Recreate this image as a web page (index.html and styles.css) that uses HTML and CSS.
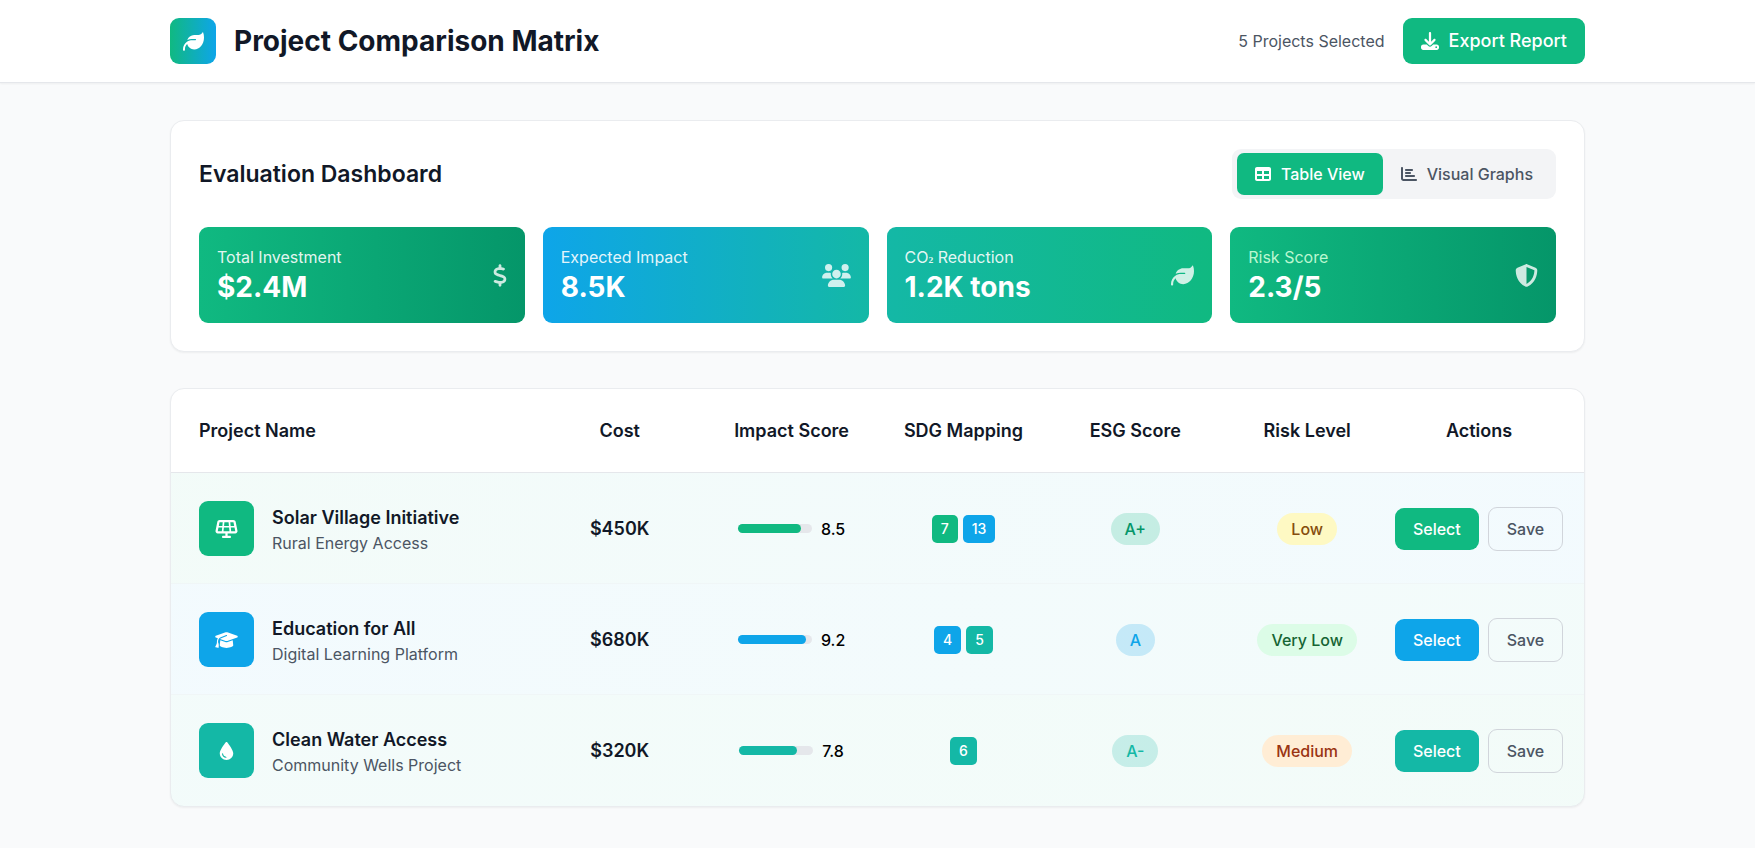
FILE: index.html
```html
<!DOCTYPE html>
<html lang="en">
<head>
<meta charset="utf-8">
<meta name="viewport" content="width=device-width, initial-scale=1">
<title>Project Comparison Matrix</title>
<link rel="stylesheet" href="styles.css">
</head>
<body>
<svg class="sprite" aria-hidden="true">
  <symbol id="leaf" viewBox="0 0 512 512"><path d="M272 96c-78.6 0-145.1 51.5-167.7 122.5c33.6-17 71.5-26.5 111.7-26.5h88c8.8 0 16 7.2 16 16s-7.2 16-16 16H288 216s0 0 0 0c-16.6 0-32.7 1.9-48.3 5.4c-25.9 5.9-49.9 16.4-71.4 30.7c0 0 0 0 0 0C38.3 298.8 0 364.9 0 440v16c0 13.3 10.7 24 24 24s24-10.7 24-24V440c0-48.7 20.7-92.5 53.8-123.2C121.6 392.3 190.3 448 272 448l1 0c132.1-.7 239-130.9 239-291.4c0-42.6-7.5-83.1-21.1-119.6c-2.6-6.9-12.7-6.6-16.2-.1C455.9 72.1 418.7 96 376 96L272 96z"/></symbol>
</svg>

<header class="topbar">
  <div class="container topbar-inner">
    <div class="brand">
      <span class="brand-logo"><svg class="icon icon-logo" aria-hidden="true"><use href="#leaf"/></svg></span>
      <h1 class="brand-title">Project Comparison Matrix</h1>
    </div>
    <div class="topbar-actions">
      <span class="selected-count">5 Projects Selected</span>
      <button type="button" class="btn-export">
        <svg class="icon icon-md" viewBox="0 0 512 512" aria-hidden="true"><path d="M288 32c0-17.7-14.3-32-32-32s-32 14.3-32 32V274.7l-73.4-73.4c-12.5-12.5-32.8-12.5-45.3 0s-12.5 32.8 0 45.3l128 128c12.5 12.5 32.8 12.5 45.3 0l128-128c12.5-12.5 12.5-32.8 0-45.3s-32.8-12.5-45.3 0L288 274.7V32zM64 352c-35.3 0-64 28.7-64 64v32c0 35.3 28.7 64 64 64H448c35.3 0 64-28.7 64-64V416c0-35.3-28.7-64-64-64H346.5l-45.3 45.3c-25 25-65.5 25-90.5 0L165.5 352H64zm368 56a24 24 0 1 1 0 48 24 24 0 1 1 0-48z"/></svg>
        Export Report
      </button>
    </div>
  </div>
</header>

<main class="container page">
  <section class="card dashboard">
    <div class="dashboard-head">
      <h2 class="section-title">Evaluation Dashboard</h2>
      <div class="toggle">
        <button type="button" class="toggle-btn toggle-active" aria-pressed="true">
          <svg class="icon icon-sm" viewBox="0 0 512 512" aria-hidden="true"><path d="M64 256V160H224v96H64zm0 64H224v96H64V320zm224 96V320H448v96H288zM448 256H288V160H448v96zM64 32C28.7 32 0 60.7 0 96V416c0 35.3 28.7 64 64 64H448c35.3 0 64-28.7 64-64V96c0-35.3-28.7-64-64-64H64z"/></svg>
          Table View
        </button>
        <button type="button" class="toggle-btn" aria-pressed="false">
          <svg class="icon icon-sm" viewBox="0 0 512 512" aria-hidden="true"><path d="M32 32c17.7 0 32 14.3 32 32V400c0 8.8 7.2 16 16 16H480c17.7 0 32 14.3 32 32s-14.3 32-32 32H80c-44.2 0-80-35.8-80-80V64C0 46.3 14.3 32 32 32zm96 96c0-17.7 14.3-32 32-32l192 0c17.7 0 32 14.3 32 32s-14.3 32-32 32H160c-17.7 0-32-14.3-32-32zm32 64H288c17.7 0 32 14.3 32 32s-14.3 32-32 32H160c-17.7 0-32-14.3-32-32s14.3-32 32-32zm0 96H416c17.7 0 32 14.3 32 32s-14.3 32-32 32H160c-17.7 0-32-14.3-32-32s14.3-32 32-32z"/></svg>
          Visual Graphs
        </button>
      </div>
    </div>
    <div class="stats">
      <div class="stat stat-green">
        <div>
          <p class="stat-label">Total Investment</p>
          <p class="stat-value">$2.4M</p>
        </div>
        <svg class="icon stat-icon stat-icon-narrow" viewBox="0 0 320 512" aria-hidden="true"><path d="M160 0c17.7 0 32 14.3 32 32V67.7c1.6 .2 3.1 .4 4.7 .7c.4 .1 .7 .1 1.1 .2l48 8.8c17.4 3.2 28.9 19.9 25.7 37.2s-19.9 28.9-37.2 25.7l-47.5-8.7c-31.3-4.6-58.9-1.5-78.3 6.2s-27.2 18.3-29 28.1c-2 10.7-.5 16.7 1.2 20.4c1.8 3.9 5.5 8.3 12.8 13.2c16.3 10.7 41.3 17.7 73.7 26.3l2.9 .8c28.6 7.6 63.6 16.8 89.6 33.8c14.2 9.3 27.6 21.9 35.9 39.5c8.5 17.9 10.3 37.9 6.4 59.2c-6.9 38-33.1 63.4-65.6 76.7c-13.7 5.6-28.6 9.2-44.4 11V480c0 17.7-14.3 32-32 32s-32-14.3-32-32V445.1c-.4-.1-.9-.1-1.3-.2l-.2 0 0 0c-24.4-3.8-64.5-14.3-91.5-26.3c-16.1-7.2-23.4-26.1-16.2-42.2s26.1-23.4 42.2-16.2c20.9 9.3 55.3 18.5 75.2 21.6c31.9 4.7 58.2 2 76-5.3c16.9-6.9 24.6-16.9 26.8-28.9c1.9-10.6 .4-16.7-1.3-20.4c-1.9-4-5.6-8.4-13-13.3c-16.4-10.7-41.5-17.7-74-26.3l-2.8-.7 0 0C119.4 279.3 84.4 270 58.4 253c-14.2-9.3-27.5-22-35.8-39.6c-8.4-17.9-10.1-37.9-6.1-59.2C23.7 116 52.3 91.2 84.8 78.3c13.3-5.3 27.9-8.9 43.2-11V32c0-17.7 14.3-32 32-32z"/></svg>
      </div>
      <div class="stat stat-blue">
        <div>
          <p class="stat-label">Expected Impact</p>
          <p class="stat-value">8.5K</p>
        </div>
        <svg class="icon stat-icon stat-icon-wide" viewBox="0 0 640 512" aria-hidden="true"><path d="M144 0a80 80 0 1 1 0 160A80 80 0 1 1 144 0zM512 0a80 80 0 1 1 0 160A80 80 0 1 1 512 0zM0 298.7C0 239.8 47.8 192 106.7 192h42.7c15.9 0 31 3.5 44.6 9.7c-1.3 7.2-1.9 14.7-1.9 22.3c0 38.2 16.8 72.5 43.3 96c-.2 0-.4 0-.7 0H21.3C9.6 320 0 310.4 0 298.7zM405.3 320c-.2 0-.4 0-.7 0c26.6-23.5 43.3-57.8 43.3-96c0-7.6-.7-15-1.9-22.3c13.6-6.3 28.7-9.7 44.6-9.7h42.7C592.2 192 640 239.8 640 298.7c0 11.8-9.6 21.3-21.3 21.3H405.3zM224 224a96 96 0 1 1 192 0 96 96 0 1 1 -192 0zM128 485.3C128 411.7 187.7 352 261.3 352H378.7C452.3 352 512 411.7 512 485.3c0 14.7-11.9 26.7-26.7 26.7H154.7c-14.7 0-26.7-11.9-26.7-26.7z"/></svg>
      </div>
      <div class="stat stat-teal">
        <div>
          <p class="stat-label">CO<span class="subscript">₂</span> Reduction</p>
          <p class="stat-value">1.2K tons</p>
        </div>
        <svg class="icon stat-icon" aria-hidden="true"><use href="#leaf"/></svg>
      </div>
      <div class="stat stat-green">
        <div>
          <p class="stat-label stat-label-mint">Risk Score</p>
          <p class="stat-value">2.3/5</p>
        </div>
        <svg class="icon stat-icon" viewBox="0 0 512 512" aria-hidden="true"><path d="M256 0c4.6 0 9.2 1 13.4 2.9L457.7 82.8c22 9.3 38.4 31 38.3 57.2c-.5 99.2-41.3 280.7-213.6 363.2c-16.7 8-36.1 8-52.8 0C57.3 420.7 16.5 239.2 16 140c-.1-26.2 16.3-47.9 38.3-57.2L242.7 2.9C246.8 1 251.4 0 256 0zm0 66.8V444.8C394 378 431.1 230.1 432 141.4L256 66.8l0 0z"/></svg>
      </div>
    </div>
  </section>

  <section class="card">
    <table class="matrix">
      <thead>
        <tr class="matrix-row matrix-head">
          <th scope="col" class="cell-name">Project Name</th>
          <th scope="col">Cost</th>
          <th scope="col">Impact Score</th>
          <th scope="col">SDG Mapping</th>
          <th scope="col">ESG Score</th>
          <th scope="col">Risk Level</th>
          <th scope="col">Actions</th>
        </tr>
      </thead>
      <tbody>
        <tr class="matrix-row row-solar">
          <td class="cell-name">
            <span class="project-icon bg-green"><svg class="icon icon-project" viewBox="0 0 640 512" aria-hidden="true"><path d="M122.2 0C91.7 0 65.5 21.5 59.5 51.4L8.3 307.4C.4 347 30.6 384 71 384H288v64H224c-17.7 0-32 14.3-32 32s14.3 32 32 32H416c17.7 0 32-14.3 32-32s-14.3-32-32-32H352V384H569c40.4 0 70.7-36.9 62.8-76.6l-51.2-256C574.5 21.5 548.3 0 517.8 0H122.2zM260.9 64H379.1l10.4 104h-139L260.9 64zM202.3 168H101.4L122.2 64h90.4L202.3 168zM91.8 216H197.5L187.1 320H71L91.8 216zm153.9 0H394.3l10.4 104-169.4 0 10.4-104zm196.8 0H548.2L569 320h-116L442.5 216zm96-48H437.7L427.3 64h90.4L538.6 168z"/></svg></span>
            <div class="project-text">
              <p class="project-name">Solar Village Initiative</p>
              <p class="project-sub">Rural Energy Access</p>
            </div>
          </td>
          <td class="cell-cost">$450K</td>
          <td class="cell-impact"><span class="bar"><span class="bar-fill bg-green" style="width: 85%"></span></span><span class="impact-value">8.5</span></td>
          <td class="cell-sdg"><span class="sdg bg-green">7</span><span class="sdg bg-blue">13</span></td>
          <td><span class="pill esg-green">A+</span></td>
          <td><span class="pill risk-low">Low</span></td>
          <td class="cell-actions"><button type="button" class="btn bg-green">Select</button><button type="button" class="btn btn-outline">Save</button></td>
        </tr>
        <tr class="matrix-row row-education">
          <td class="cell-name">
            <span class="project-icon bg-blue"><svg class="icon icon-project" viewBox="0 0 640 512" aria-hidden="true"><path d="M320 32c-8.1 0-16.1 1.4-23.7 4.1L15.8 137.4C6.3 140.9 0 149.9 0 160s6.3 19.1 15.8 22.6l57.9 20.9C57.3 229.3 48 259.8 48 291.9v28.1c0 28.4-10.8 57.7-22.3 80.8c-6.5 13-13.9 25.8-22.5 37.6C0 442.7-.9 448.3 .9 453.4s6 8.9 11.2 10.2l64 16c4.2 1.1 8.7 .3 12.4-2s6.3-6.1 7.1-10.4c8.6-42.8 4.3-81.2-2.1-108.7C90.3 344.3 86 329.8 80 316.5V291.9c0-30.2 10.2-58.7 27.9-81.5c12.9-15.5 29.6-28 49.2-35.7l157-61.7c8.2-3.2 17.5 .8 20.7 9s-.8 17.5-9 20.7l-157 61.7c-12.4 4.9-23.3 12.4-32.2 21.6l159.6 57.6c7.6 2.7 15.6 4.1 23.7 4.1s16.1-1.4 23.7-4.1L624.2 182.6c9.5-3.4 15.8-12.5 15.8-22.6s-6.3-19.1-15.8-22.6L343.7 36.1C336.1 33.4 328.1 32 320 32zM128 408c0 35.3 86 72 192 72s192-36.7 192-72L496.7 262.6 354.5 314c-11.1 4-22.8 6-34.5 6s-23.5-2-34.5-6L143.3 262.6 128 408z"/></svg></span>
            <div class="project-text">
              <p class="project-name">Education for All</p>
              <p class="project-sub">Digital Learning Platform</p>
            </div>
          </td>
          <td class="cell-cost">$680K</td>
          <td class="cell-impact"><span class="bar"><span class="bar-fill bg-blue" style="width: 92%"></span></span><span class="impact-value">9.2</span></td>
          <td class="cell-sdg"><span class="sdg bg-blue">4</span><span class="sdg bg-teal">5</span></td>
          <td><span class="pill esg-blue">A</span></td>
          <td><span class="pill risk-very-low">Very Low</span></td>
          <td class="cell-actions"><button type="button" class="btn bg-blue">Select</button><button type="button" class="btn btn-outline">Save</button></td>
        </tr>
        <tr class="matrix-row row-water">
          <td class="cell-name">
            <span class="project-icon bg-teal"><svg class="icon icon-project" viewBox="0 0 384 512" aria-hidden="true"><path d="M192 512C86 512 0 426 0 320C0 228.8 130.2 57.7 166.6 11.7C172.6 4.2 181.5 0 191.1 0h1.8c9.6 0 18.5 4.2 24.5 11.7C253.8 57.7 384 228.8 384 320c0 106-86 192-192 192zM96 336c0-8.8-7.2-16-16-16s-16 7.2-16 16c0 61.9 50.1 112 112 112c8.8 0 16-7.2 16-16s-7.2-16-16-16c-44.2 0-80-35.8-80-80z"/></svg></span>
            <div class="project-text">
              <p class="project-name">Clean Water Access</p>
              <p class="project-sub">Community Wells Project</p>
            </div>
          </td>
          <td class="cell-cost">$320K</td>
          <td class="cell-impact"><span class="bar"><span class="bar-fill bg-teal" style="width: 78%"></span></span><span class="impact-value">7.8</span></td>
          <td class="cell-sdg"><span class="sdg bg-teal">6</span></td>
          <td><span class="pill esg-teal">A-</span></td>
          <td><span class="pill risk-medium">Medium</span></td>
          <td class="cell-actions"><button type="button" class="btn bg-teal">Select</button><button type="button" class="btn btn-outline">Save</button></td>
        </tr>
      </tbody>
    </table>
  </section>
</main>
</body>
</html>
```
FILE: styles.css
```css
:root {
  --green: #10b981;
  --green-dark: #059669;
  --blue: #0ea5e9;
  --teal: #14b8a6;
  --ink: #111827;
  --muted: #4b5563;
  --line: #e5e7eb;
}

* {
  box-sizing: border-box;
}

body {
  margin: 0;
  background: #f9fafb;
  color: #000;
  font-family: Inter, "Liberation Sans", sans-serif;
  font-size: 18px;
  line-height: 27px;
}

h1, h2, p {
  margin: 0;
}

button {
  border: 0;
  margin: 0;
  font-family: inherit;
  cursor: pointer;
}

.sprite {
  position: absolute;
  width: 0;
  height: 0;
}

.icon {
  display: block;
  flex: none;
  fill: currentColor;
}

.icon-logo { width: 21px; height: 21px; }
.icon-md { width: 18px; height: 18px; }
.icon-sm { width: 16px; height: 16px; }
.icon-project { width: 23px; height: 18px; }

.bg-green { background: var(--green); }
.bg-blue { background: var(--blue); }
.bg-teal { background: var(--teal); }

.container {
  max-width: 1471px;
  margin: 0 auto;
  padding: 0 28px;
}

/* Top bar */
.topbar {
  background: #fff;
  border-bottom: 1px solid var(--line);
  box-shadow: 0 1px 2px rgba(0, 0, 0, 0.05);
}

.topbar-inner {
  display: flex;
  align-items: center;
  justify-content: space-between;
  padding-top: 18px;
  padding-bottom: 18px;
}

.brand,
.topbar-actions {
  display: flex;
  align-items: center;
  gap: 18px;
}

.brand-logo {
  display: flex;
  align-items: center;
  justify-content: center;
  width: 46px;
  height: 46px;
  border-radius: 9px;
  background: linear-gradient(to right, var(--green), var(--blue));
  color: #fff;
}

.brand-title {
  font-size: 28px;
  font-weight: 700;
  line-height: 36px;
  color: var(--ink);
}

.selected-count {
  font-size: 16px;
  line-height: 24px;
  color: var(--muted);
}

.btn-export {
  display: flex;
  align-items: center;
  gap: 10px;
  padding: 9px 18px;
  border-radius: 9px;
  background: var(--green);
  color: #fff;
  font-size: 18px;
  font-weight: 500;
  line-height: 28px;
}

/* Cards */
.page {
  display: flex;
  flex-direction: column;
  gap: 36px;
  padding-top: 37px;
  padding-bottom: 37px;
}

.card {
  overflow: hidden;
  background: #fff;
  border: 1px solid #eaecef;
  border-radius: 14px;
  box-shadow: 0 1px 2px rgba(0, 0, 0, 0.05);
}

.dashboard {
  padding: 28px;
}

.dashboard-head {
  display: flex;
  align-items: center;
  justify-content: space-between;
  margin-bottom: 28px;
}

.section-title {
  font-size: 23px;
  font-weight: 600;
  line-height: 32px;
  color: var(--ink);
}

.toggle {
  display: flex;
  padding: 4px 5px;
  border-radius: 9px;
  background: #f3f4f6;
}

.toggle-btn {
  display: flex;
  align-items: center;
  gap: 10px;
  padding: 9px 18px;
  border-radius: 7px;
  background: transparent;
  color: var(--muted);
  font-size: 16px;
  font-weight: 500;
  line-height: 24px;
}

.toggle-active {
  background: var(--green);
  color: #fff;
}

/* Stat tiles */
.stats {
  display: grid;
  grid-template-columns: repeat(4, minmax(0, 1fr));
  gap: 18px;
}

.stat {
  display: flex;
  align-items: center;
  justify-content: space-between;
  padding: 18px;
  border-radius: 9px;
  color: #fff;
}

.stat-green { background: linear-gradient(to right, var(--green), var(--green-dark)); }
.stat-blue { background: linear-gradient(to right, var(--blue), var(--teal)); }
.stat-teal { background: linear-gradient(to right, var(--teal), var(--green)); }

.stat-label {
  font-size: 16px;
  line-height: 24px;
  color: rgba(255, 255, 255, 0.9);
}

.stat-label-mint {
  color: #bbf7d0;
}

.subscript {
  font-family: "Liberation Serif", serif;
  font-weight: 700;
  line-height: 0;
  vertical-align: 3px;
}

.stat-value {
  font-size: 28px;
  font-weight: 700;
  line-height: 36px;
}

.stat-icon {
  width: 23px;
  height: 23px;
  opacity: 0.8;
}

.stat-icon-narrow { width: 14px; }
.stat-icon-wide { width: 29px; }

/* Comparison table */
.matrix,
.matrix thead,
.matrix tbody {
  display: block;
}

.matrix-row {
  display: grid;
  grid-template-columns: repeat(8, minmax(0, 1fr));
  gap: 18px;
  align-items: center;
  padding: 28px;
  box-shadow: inset 0 -1px #f0f6f7;
}

.matrix-row th,
.matrix-row td {
  padding: 0;
  text-align: center;
}

.matrix-row .cell-name {
  grid-column: span 2;
  text-align: left;
}

.matrix-head {
  border-bottom: 1px solid var(--line);
  box-shadow: none;
  color: var(--ink);
}

.matrix-row th {
  font-weight: 600;
}

.matrix-row:last-child {
  box-shadow: none;
}

.row-solar { background: linear-gradient(to right, rgba(16, 185, 129, 0.05), rgba(14, 165, 233, 0.05)); }
.row-education { background: linear-gradient(to right, rgba(14, 165, 233, 0.05), rgba(20, 184, 166, 0.05)); }
.row-water { background: linear-gradient(to right, rgba(20, 184, 166, 0.05), rgba(16, 185, 129, 0.05)); }

td.cell-name {
  display: flex;
  align-items: center;
  gap: 18px;
}

.project-icon {
  display: flex;
  flex: none;
  align-items: center;
  justify-content: center;
  width: 55px;
  height: 55px;
  border-radius: 9px;
  color: #fff;
}

.project-text {
  padding-top: 2px;
}

.project-name {
  font-weight: 600;
  color: var(--ink);
}

.project-sub {
  font-size: 16px;
  line-height: 24px;
  color: var(--muted);
}

.cell-cost {
  font-weight: 600;
  color: var(--ink);
}

.cell-impact,
.cell-sdg,
.cell-actions {
  display: flex;
  align-items: center;
  justify-content: center;
  gap: 9px;
}

.bar {
  width: 74px;
  height: 9px;
  border-radius: 5px;
  background: var(--line);
}

.bar-fill {
  display: block;
  height: 100%;
  border-radius: 5px;
}

.impact-value {
  font-size: 16px;
  font-weight: 500;
  line-height: 24px;
}

.matrix-row .cell-sdg {
  gap: 5px;
}

.sdg {
  padding: 4px 9px;
  border-radius: 5px;
  color: #fff;
  font-size: 14px;
  font-weight: 500;
  line-height: 20px;
}

.pill {
  display: inline-block;
  padding: 4px 14px;
  border-radius: 16px;
  font-size: 16px;
  font-weight: 500;
  line-height: 24px;
  vertical-align: middle;
}

.esg-green { background: rgba(16, 185, 129, 0.2); color: var(--green-dark); }
.esg-blue { background: rgba(14, 165, 233, 0.2); color: var(--blue); }
.esg-teal { background: rgba(20, 184, 166, 0.2); color: var(--teal); }
.risk-low { background: #fef9c3; color: #854d0e; }
.risk-very-low { background: #dcfce7; color: #166534; }
.risk-medium { background: #ffedd5; color: #9a3412; }

.btn {
  flex: none;
  padding: 9px 18px;
  border-radius: 9px;
  color: #fff;
  font-size: 16px;
  font-weight: 500;
  line-height: 24px;
}

.btn-outline {
  border: 1px solid #d1d5db;
  background: transparent;
  color: var(--muted);
}
```
